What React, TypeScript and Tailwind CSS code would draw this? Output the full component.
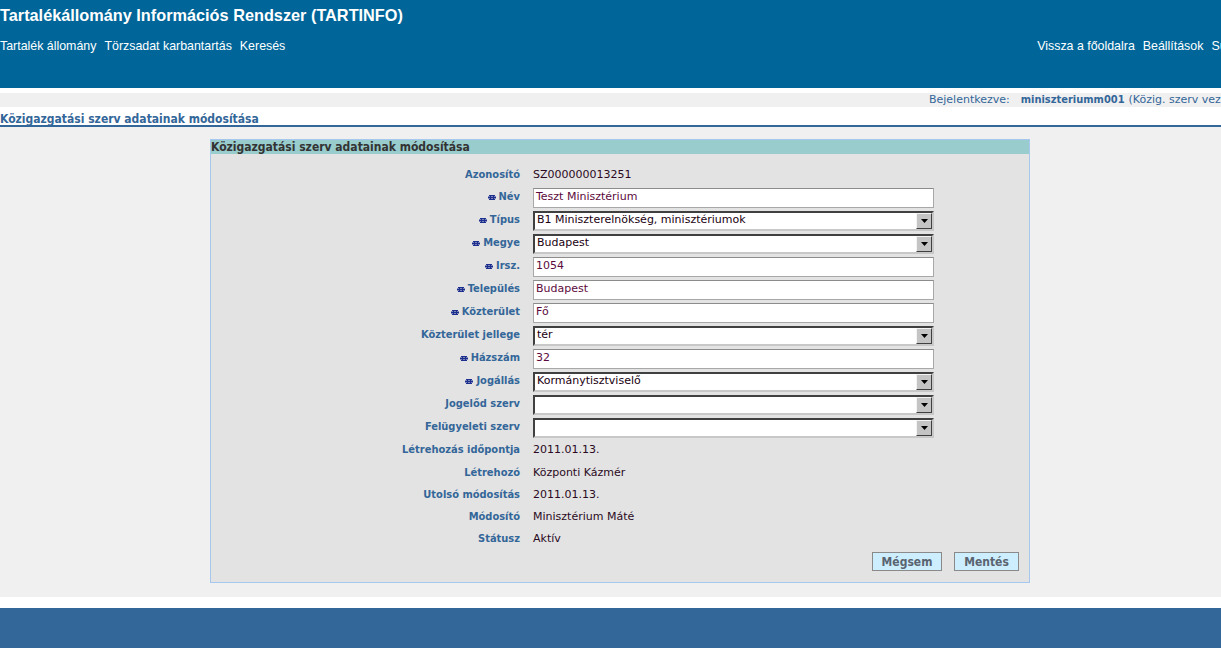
import React from "react";

const verdana = "font-['DejaVu_Sans',Verdana,sans-serif]";
const tahomaB = "font-['DejaVu_Sans',Tahoma,sans-serif] font-bold [font-stretch:condensed]";

function Star() {
  return (
    <svg width="8" height="5" viewBox="0 0 8 5" className="mr-[3px] inline-block">
      <rect x="1" y="0" width="6" height="1" fill="#1c2f8f" />
      <rect x="0" y="1.5" width="8" height="2" fill="#1c2f8f" />
      <rect x="1" y="4" width="6" height="1" fill="#1c2f8f" />
      <rect x="2" y="0" width="1" height="5" fill="#1c2f8f" />
      <rect x="5" y="0" width="1" height="5" fill="#1c2f8f" />
    </svg>
  );
}

function Label({ text, req, h = "h-[23px]" }: { text: string; req?: boolean; h?: string }) {
  return (
    <div className={`${h} flex items-center justify-end text-[11px] text-[#336699] ${tahomaB}`}>
      {req && <Star />}
      {text}
    </div>
  );
}

function TextInput({ value }: { value: string }) {
  return (
    <div className="h-[23px] flex items-center">
      <div className="h-[20px] w-[401px] bg-white border border-[#a8a8a8] border-t-[#8c8c8c] flex items-center px-[2px] text-[11px] text-[#5c0a3c]">
        {value}
      </div>
    </div>
  );
}

function SelectBox({ value }: { value: string }) {
  return (
    <div className="h-[23px] flex items-center">
      <div className="h-[20px] w-[401px] bg-white border-2 border-t-[#404040] border-l-[#404040] border-b-[#c8c8c8] border-r-[#c8c8c8] flex items-center justify-between">
        <span className="pl-[2px] text-[11px] text-[#1a0010]">{value}</span>
        <div className="h-[16px] w-[16px] bg-[#c4c4c4] border border-t-[#f4f4f4] border-l-[#f4f4f4] border-b-[#404040] border-r-[#404040] flex items-center justify-center">
          <svg width="7" height="4" viewBox="0 0 7 4">
            <polygon points="0,0 7,0 3.5,4" fill="#000" />
          </svg>
        </div>
      </div>
    </div>
  );
}

function TextValue({ value, h = "h-[22px]" }: { value: string; h?: string }) {
  return (
    <div className={`${h} flex items-center text-[11px] text-[#2a0a22]`}>{value}</div>
  );
}

type Row =
  | { label: string; req?: boolean; kind: "text"; value: string; h?: string }
  | { label: string; req?: boolean; kind: "input"; value: string }
  | { label: string; req?: boolean; kind: "select"; value: string };

const rows: Row[] = [
  { label: "Azonosító", kind: "text", value: "SZ000000013251" },
  { label: "Név", req: true, kind: "input", value: "Teszt Minisztérium" },
  { label: "Típus", req: true, kind: "select", value: "B1 Miniszterelnökség, minisztériumok" },
  { label: "Megye", req: true, kind: "select", value: "Budapest" },
  { label: "Irsz.", req: true, kind: "input", value: "1054" },
  { label: "Település", req: true, kind: "input", value: "Budapest" },
  { label: "Közterület", req: true, kind: "input", value: "Fő" },
  { label: "Közterület jellege", kind: "select", value: "tér" },
  { label: "Házszám", req: true, kind: "input", value: "32" },
  { label: "Jogállás", req: true, kind: "select", value: "Kormánytisztviselő" },
  { label: "Jogelőd szerv", kind: "select", value: "" },
  { label: "Felügyeleti szerv", kind: "select", value: "" },
  { label: "Létrehozás időpontja", kind: "text", value: "2011.01.13.", h: "h-[23px]" },
  { label: "Létrehozó", kind: "text", value: "Központi Kázmér" },
  { label: "Utolsó módosítás", kind: "text", value: "2011.01.13." },
  { label: "Módosító", kind: "text", value: "Minisztérium Máté" },
  { label: "Státusz", kind: "text", value: "Aktív" },
];

export default function App() {
  return (
    <div className={`w-[1221px] h-[648px] overflow-hidden bg-white flex flex-col ${verdana}`}>
      {/* Header */}
      <div className="h-[88px] bg-[#006699] text-white font-['Liberation_Sans',Arial,sans-serif] whitespace-nowrap overflow-hidden shrink-0">
        <div className="h-[31px] flex items-center text-[16.3px] font-bold">
          Tartalékállomány Információs Rendszer (TARTINFO)
        </div>
        <div className="h-[31px] flex items-center text-[12.4px]">
          <div className="flex gap-[8px]">
            <span>Tartalék állomány</span>
            <span>Törzsadat karbantartás</span>
            <span>Keresés</span>
          </div>
          <div className="ml-auto -mr-[68px] flex gap-[8px] shrink-0">
            <span>Vissza a főoldalra</span>
            <span>Beállítások</span>
            <span>Súgó</span>
            <span>Kilépés</span>
          </div>
        </div>
      </div>

      <div className="h-[5px] shrink-0" />

      {/* Logged-in bar */}
      <div className="h-[14px] bg-[#f0f0f0] flex items-center whitespace-nowrap overflow-hidden text-[11px] text-[#336699] shrink-0">
        <div className="ml-auto -mr-[22px] flex shrink-0">
          <span>Bejelentkezve:</span>
          <span className={`ml-[11px] ${tahomaB}`}>miniszteriumm001</span>
          <span className="ml-[4px]">(Közig. szerv vezető)</span>
        </div>
      </div>

      {/* Page title */}
      <div className={`h-[20px] pt-[5px] text-[12px] leading-[14px] text-[#336699] border-b-2 border-[#336699] shrink-0 ${tahomaB}`}>
        Közigazgatási szerv adatainak módosítása
      </div>

      {/* Content */}
      <div className="h-[470px] bg-[#f0f0f0] pt-[12px] pl-[210px] shrink-0">
        <div className="w-[820px] border border-[#a6c8ee] bg-[#e3e3e3]">
          <div className={`h-[14px] bg-[#99cccc] flex items-center text-[12px] text-[#333333] ${tahomaB}`}>
            Közigazgatási szerv adatainak módosítása
          </div>
          <div className="pt-[10px] grid grid-cols-[309px_401px] gap-x-[13px]">
            {rows.map((r) => (
              <React.Fragment key={r.label}>
                <Label text={r.label} req={r.req} h={r.kind === "text" ? r.h ?? "h-[22px]" : "h-[23px]"} />
                {r.kind === "text" ? (
                  <TextValue value={r.value} h={r.h} />
                ) : r.kind === "input" ? (
                  <TextInput value={r.value} />
                ) : (
                  <SelectBox value={r.value} />
                )}
              </React.Fragment>
            ))}
          </div>
          <div className="flex justify-end gap-[12px] pr-[10px] pt-[2px] pb-[11px]">
            <button className={`h-[19px] w-[70px] bg-[#cceeff] border border-[#8a8a8a] text-[12px] text-[#5a6470] ${tahomaB}`}>
              Mégsem
            </button>
            <button className={`h-[19px] w-[65px] bg-[#cceeff] border border-[#8a8a8a] text-[12px] text-[#5a6470] ${tahomaB}`}>
              Mentés
            </button>
          </div>
        </div>
      </div>

      <div className="h-[11px] shrink-0" />

      {/* Footer */}
      <div className="flex-1 bg-[#336699]" />
    </div>
  );
}
